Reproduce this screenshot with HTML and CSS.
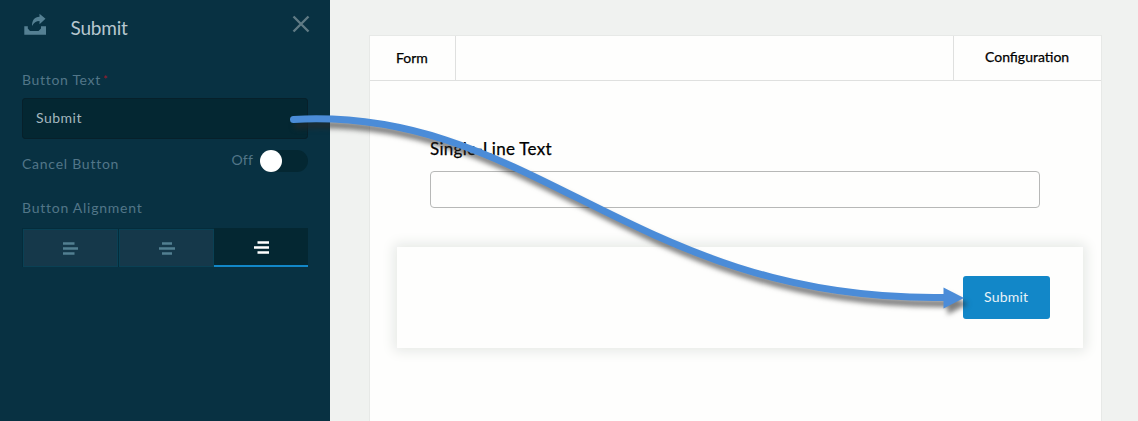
FILE: index.html
```html
<!DOCTYPE html>
<html lang="en">
<head>
<meta charset="utf-8">
<title>Form editor</title>
<link rel="stylesheet" href="styles.css">
</head>
<body>
<div class="app">
  <aside class="sidebar">
    <header class="panel-head">
      <svg class="tray" width="24" height="24" viewBox="0 0 24 24"><path d="M0.3 13.3H3.8V15.5L6 18H14.5L17 15.5V13.3H22V21.8H0.3Z"/><path d="M8 13C8 7 10.5 4.2 15.5 3.7V0.8L21.5 5.8L15.5 11.2V8C12 8.2 10 9.5 8 13Z"/></svg>
      <h1 class="title"><span class="t-title">Submit</span></h1>
      <svg class="close" width="18" height="18" viewBox="0 0 18 18"><path d="M1.5 1.5L16.5 16.5M16.5 1.5L1.5 16.5"/></svg>
    </header>
    <label class="label"><span class="t-button-text">Button Text</span><span class="required">*</span></label>
    <div class="input"><span class="t-input">Submit</span></div>
    <div class="cancel-row">
      <span class="label t-cancel">Cancel Button</span>
      <span class="off">Off</span>
      <span class="toggle"><span class="knob"></span></span>
    </div>
    <span class="label align-label"><span class="t-align">Button Alignment</span></span>
    <div class="align-group">
      <div class="align-btn"><svg width="15" height="13" viewBox="0 0 15 13"><path d="M0 1.5H11.5M0 6.5H15M0 11.5H11.5"/></svg></div>
      <div class="align-btn"><svg width="16" height="13" viewBox="0 0 16 13"><path d="M3 1.5H13M0 6.5H16M3 11.5H13"/></svg></div>
      <div class="align-btn active"><svg width="15" height="13" viewBox="0 0 15 13"><path d="M3.5 1.5H15M0 6.5H15M3.5 11.5H15"/></svg></div>
    </div>
  </aside>
  <main class="canvas">
    <section class="sheet">
      <nav class="tabs">
        <div class="tab form-tab"><span class="t-form">Form</span></div>
        <div class="tab config-tab"><span class="t-config">Configuration</span></div>
      </nav>
      <div class="field">
        <div class="field-label"><span class="t-single">Single-Line Text</span></div>
        <div class="field-box"></div>
      </div>
      <div class="submit-card"><div class="submit"><span class="t-submit">Submit</span></div></div>
    </section>
  </main>
  <svg class="arrow" width="1138" height="421" viewBox="0 0 1138 421">
    <path class="curve" d="M293.5 119.5C533 106 633 302 944 297.5"/>
    <path class="head" d="M943.5 287.5L964 298L943.5 308.5Z"/>
  </svg>
</div>
</body>
</html>
```
FILE: styles.css
```css
* { box-sizing: border-box; }
body { margin: 0; font-family: Lato, "Open Sans", sans-serif; }
.app { position: relative; display: flex; width: 1138px; height: 421px; overflow: hidden; background: #f0f2f0; }
.sidebar { width: 330px; height: 421px; padding: 0 22px; background: #083142; color: #527688; }
.panel-head { display: flex; height: 70px; padding: 13px 0 0 2px; }
.tray { fill: #558093; }
.title { margin: 0 0 0 22.5px; flex: 1; font-size: 19px; line-height: 30px; font-weight: 400; letter-spacing: -.2px; color: #b7c7cf; }
.close { margin: 2px -2px 0 0; fill: none; stroke: #5f7a84; stroke-width: 2.4; }
.label { display: block; font-size: 14px; line-height: 20px; letter-spacing: .75px; }
.t-button-text { letter-spacing: .68px; }
.required { margin-left: 2px; font-size: 11px; line-height: 10px; color: #9b1c2c; vertical-align: 1px; }
.input { height: 41px; margin-top: 8px; padding: 0 13px; border: 1px solid #07202a; border-radius: 3px; background: #042732; color: #a5b7bf; font-size: 14px; line-height: 38px; letter-spacing: .5px; }
.cancel-row { display: flex; height: 59px; padding-top: 11px; }
.t-cancel { flex: 1; padding-top: 4px; }
.off { margin-right: 7px; font-size: 14px; line-height: 20px; letter-spacing: .2px; }
.toggle { width: 48px; height: 22px; border-radius: 11px; background: #042732; }
.knob { display: block; width: 22px; height: 22px; border-radius: 50%; background: #fff; }
.align-label { height: 30px; }
.align-group { display: flex; width: 286px; height: 39px; background: linear-gradient(#042c3b, #042c3b) no-repeat 0 0 / 100% 39px; }
.align-btn { display: flex; flex: 0 0 95px; justify-content: center; align-items: center; margin: 1px 1px 0 0; border: 1px solid #0a4054; background: #15384a; }
.align-btn:first-child { flex-basis: 95px; margin-left: 1px; }
.align-btn:nth-child(2) { margin-right: 0; }
.align-btn svg { fill: none; stroke: #527f91; stroke-width: 2.5; }
.align-btn.active { flex: 1; margin: 0; border: 0; border-bottom: 2px solid #1287c8; background: #042732; }
.align-btn.active svg { stroke: #fff; margin-top: 2px; }
.canvas { flex: 1; padding: 35px 36px 0 39px; }
.sheet { height: 386px; border: 1px solid #e7e9e7; border-bottom: 0; background: #fefefd; }
.tabs { display: flex; justify-content: space-between; height: 45px; border-bottom: 1px solid #dfe0df; color: #000; font-size: 14px; line-height: 44px; -webkit-text-stroke: .25px #000; }
.form-tab { width: 86px; padding-left: 26px; border-right: 1px solid #dfe0df; }
.config-tab { width: 148px; padding-left: 31px; border-left: 1px solid #dfe0df; line-height: 42px; }
.field { padding: 55px 61px 0 60px; }
.field-label { height: 35px; font-size: 17px; line-height: 25px; letter-spacing: .28px; -webkit-text-stroke: .25px #000; }
.field-box { height: 37px; border: 1px solid #b7b8b7; border-radius: 4px; }
.submit-card { display: flex; justify-content: flex-end; height: 101px; margin: 39px 18px 0 27px; padding: 29px 33px 0 0; box-shadow: 0 0 12px 3px #e5e8e5; background: #fefefd; }
.submit { width: 87px; height: 43px; padding-left: 21px; border-radius: 3px; background: #1287c8; color: #e8f2f7; font-size: 14px; line-height: 42px; letter-spacing: .2px; }
.arrow { position: absolute; inset: 0; filter: drop-shadow(4px 6px 2.5px rgba(40,40,40,.6)); }
.curve { fill: none; stroke: #4b8cd8; stroke-width: 7; stroke-linecap: round; }
.head { fill: #4b8cd8; }
```
